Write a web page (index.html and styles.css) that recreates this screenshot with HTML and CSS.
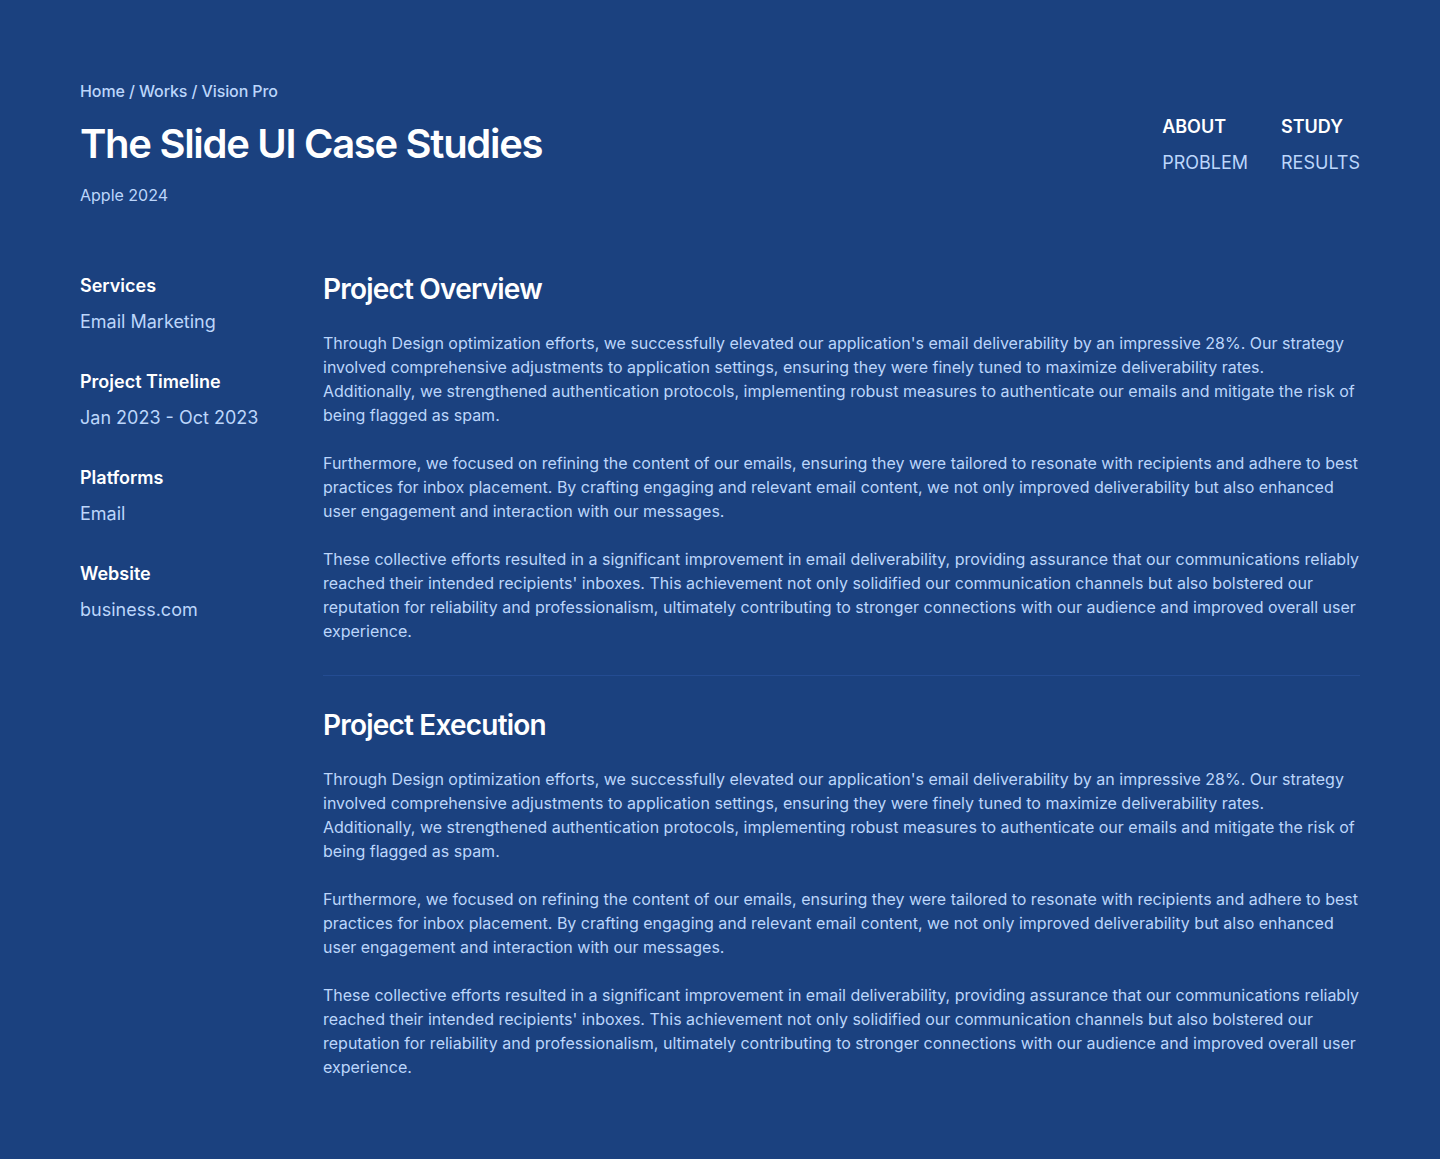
FILE: index.html
```html
<!DOCTYPE html>
<html lang="en">
<head>
<meta charset="utf-8">
<title>The Slide UI Case Studies</title>
<link rel="stylesheet" href="styles.css">
</head>
<body>
<div class="page">
  <header class="header">
    <div class="intro">
      <nav class="crumbs">Home / Works / Vision Pro</nav>
      <h1 class="title">The Slide UI Case Studies</h1>
      <p class="meta">Apple 2024</p>
    </div>
    <nav class="toc">
      <a class="toc-main">ABOUT</a>
      <a class="toc-main">STUDY</a>
      <a class="toc-sub">PROBLEM</a>
      <a class="toc-sub">RESULTS</a>
    </nav>
  </header>

  <div class="body">
    <aside class="side">
      <div class="fact">
        <div class="fact-label">Services</div>
        <div class="fact-value">Email Marketing</div>
      </div>
      <div class="fact">
        <div class="fact-label">Project Timeline</div>
        <div class="fact-value">Jan 2023 - Oct 2023</div>
      </div>
      <div class="fact">
        <div class="fact-label">Platforms</div>
        <div class="fact-value">Email</div>
      </div>
      <div class="fact">
        <div class="fact-label">Website</div>
        <div class="fact-value">business.com</div>
      </div>
    </aside>

    <main class="main">
      <section class="section">
        <h2 class="section-title">Project Overview</h2>
        <p>Through Design optimization efforts, we successfully elevated our application's email deliverability by an impressive 28%. Our strategy involved comprehensive adjustments to application settings, ensuring they were finely tuned to maximize deliverability rates. Additionally, we strengthened authentication protocols, implementing robust measures to authenticate our emails and mitigate the risk of being flagged as spam.</p>
        <p>Furthermore, we focused on refining the content of our emails, ensuring they were tailored to resonate with recipients and adhere to best practices for inbox placement. By crafting engaging and relevant email content, we not only improved deliverability but also enhanced user engagement and interaction with our messages.</p>
        <p>These collective efforts resulted in a significant improvement in email deliverability, providing assurance that our communications reliably reached their intended recipients' inboxes. This achievement not only solidified our communication channels but also bolstered our reputation for reliability and professionalism, ultimately contributing to stronger connections with our audience and improved overall user experience.</p>
      </section>
      <hr class="divider">
      <section class="section">
        <h2 class="section-title">Project Execution</h2>
        <p>Through Design optimization efforts, we successfully elevated our application's email deliverability by an impressive 28%. Our strategy involved comprehensive adjustments to application settings, ensuring they were finely tuned to maximize deliverability rates. Additionally, we strengthened authentication protocols, implementing robust measures to authenticate our emails and mitigate the risk of being flagged as spam.</p>
        <p>Furthermore, we focused on refining the content of our emails, ensuring they were tailored to resonate with recipients and adhere to best practices for inbox placement. By crafting engaging and relevant email content, we not only improved deliverability but also enhanced user engagement and interaction with our messages.</p>
        <p>These collective efforts resulted in a significant improvement in email deliverability, providing assurance that our communications reliably reached their intended recipients' inboxes. This achievement not only solidified our communication channels but also bolstered our reputation for reliability and professionalism, ultimately contributing to stronger connections with our audience and improved overall user experience.</p>
      </section>
    </main>
  </div>
</div>
</body>
</html>
```

FILE: styles.css
```css
* { box-sizing: border-box; }
html, body {
  margin: 0;
  padding: 0;
  background: #1b417f;
}
body {
  font-family: Inter, "Noto Sans", "Liberation Sans", sans-serif;
  color: #ffffff;
  min-height: 1159px;
}
.page {
  padding: 80px 80px 60px 80px;
}
.header {
  display: flex;
  justify-content: space-between;
  align-items: flex-start;
}
.crumbs {
  font-size: 16px;
  line-height: 22px;
  font-weight: 500;
  letter-spacing: -0.1px;
  color: #bcd6fb;
}
.title {
  margin: 18px 0 0 0;
  font-size: 40px;
  line-height: 48px;
  font-weight: 600;
  letter-spacing: -1.3px;
  color: #ffffff;
}
.meta {
  margin: 16px 0 0 0;
  font-size: 16px;
  line-height: 22px;
  color: #bcd6fb;
}
.toc {
  margin-top: 33px;
  display: grid;
  grid-template-columns: auto auto;
  column-gap: 33px;
  row-gap: 8px;
}
.toc a {
  font-size: 18px;
  line-height: 28px;
  text-decoration: none;
}
.toc-main {
  font-weight: 600;
  color: #ffffff;
}
.toc-sub {
  font-weight: 400;
  color: #bcd6fb;
}
.body {
  margin-top: 65px;
  display: grid;
  grid-template-columns: 211px 1fr;
  column-gap: 32px;
}
.side {
  padding-top: 3px;
  display: flex;
  flex-direction: column;
  gap: 36px;
}
.fact {
  display: flex;
  flex-direction: column;
  gap: 12px;
}
.fact-label {
  font-size: 18px;
  line-height: 24px;
  font-weight: 600;
  color: #ffffff;
}
.fact-value {
  font-size: 18px;
  line-height: 24px;
  color: #bcd6fb;
}
.section-title {
  margin: 0 0 24px 0;
  font-size: 28px;
  line-height: 36px;
  font-weight: 600;
  letter-spacing: -0.8px;
  color: #ffffff;
}
.section p {
  margin: 0 0 24px 0;
  font-size: 16px;
  line-height: 24px;
  color: #bcd6fb;
}
.section p:last-child {
  margin-bottom: 0;
}
.divider {
  border: 0;
  height: 1px;
  background: #244c92;
  margin: 32px 0 31px 0;
}
```
